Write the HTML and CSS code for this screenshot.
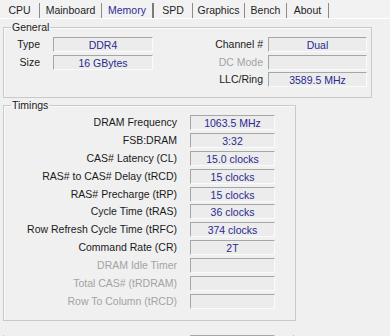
FILE: index.html
```html
<!DOCTYPE html>
<html>
<head>
<meta charset="utf-8">
<link rel="stylesheet" href="styles.css">
</head>
<body>
<div class="tabs">
  <div class="tab t-cpu">CPU</div>
  <div class="tab t-main">Mainboard</div>
  <div class="tab t-mem active">Memory</div>
  <div class="tab t-spd">SPD</div>
  <div class="tab t-gfx">Graphics</div>
  <div class="tab t-bench">Bench</div>
  <div class="tab t-about">About</div>
</div>

<fieldset class="group general">
  <legend>General</legend>
  <div class="gen-grid">
    <div class="lbl l1">Type</div>
    <div class="field">DDR4</div>
    <div class="lbl l2">Channel #</div>
    <div class="field">Dual</div>

    <div class="lbl l1">Size</div>
    <div class="field">16 GBytes</div>
    <div class="lbl l2 dis">DC Mode</div>
    <div class="field"></div>

    <div class="lbl l1"></div>
    <div></div>
    <div class="lbl l2">LLC/Ring</div>
    <div class="field">3589.5 MHz</div>
  </div>
</fieldset>

<fieldset class="group timings">
  <legend>Timings</legend>
  <div class="tim-grid">
    <div class="lbl">DRAM Frequency</div><div class="field">1063.5 MHz</div>
    <div class="lbl">FSB:DRAM</div><div class="field">3:32</div>
    <div class="lbl">CAS# Latency (CL)</div><div class="field">15.0 clocks</div>
    <div class="lbl">RAS# to CAS# Delay (tRCD)</div><div class="field">15 clocks</div>
    <div class="lbl">RAS# Precharge (tRP)</div><div class="field">15 clocks</div>
    <div class="lbl">Cycle Time (tRAS)</div><div class="field">36 clocks</div>
    <div class="lbl">Row Refresh Cycle Time (tRFC)</div><div class="field">374 clocks</div>
    <div class="lbl">Command Rate (CR)</div><div class="field">2T</div>
    <div class="lbl dis">DRAM Idle Timer</div><div class="field"></div>
    <div class="lbl dis">Total CAS# (tRDRAM)</div><div class="field"></div>
    <div class="lbl dis">Row To Column (tRCD)</div><div class="field"></div>
  </div>
</fieldset>

<div class="bottom">
  <div class="field bottom-field"></div>
</div>
</body>
</html>
```

FILE: styles.css
```css
html, body {
  margin: 0;
  padding: 0;
  background: #f0f0f0;
  font-family: "Liberation Sans", Arial, sans-serif;
  font-size: 10.5px;
  color: #1a1a1a;
  overflow: hidden;
  width: 390px;
  height: 336px;
}

.tabs {
  display: flex;
  height: 18px;
  border-bottom: 1px solid #ffffff;
  background: #f2f2f2;
}

.tab {
  box-sizing: border-box;
  height: 15px;
  margin-top: 3px;
  padding-top: 0;
  text-align: center;
  border-right: 1px solid #8c8c8c;
  line-height: 14px;
  color: #1e1e1e;
}

.tab.active {
  color: #2c2c94;
  border-right: 2px solid #7a7a7a;
}

.t-cpu { width: 40px; }
.t-main { width: 62px; }
.t-mem { width: 52px; }
.t-spd { width: 39px; }
.t-gfx { width: 52px; }
.t-bench { width: 42px; }
.t-about { width: 42px; }

.group {
  margin: 0 0 0 3px;
  border: 1px solid #c9c9c9;
  box-shadow: inset 1px 1px 0 #fafafa;
  padding: 0;
  box-sizing: border-box;
}

.group legend {
  padding: 0 1px;
  margin-left: 6px;
  line-height: 13px;
  color: #1a1a1a;
}

.general {
  width: 369px;
  margin-top: 2px;
  padding: 3px 4px 10px 1px;
}

.gen-grid {
  display: grid;
  grid-template-columns: 48px 100px 1fr 99px;
  grid-auto-rows: 15px;
  row-gap: 2.5px;
}

.lbl {
  text-align: right;
  line-height: 15px;
  white-space: nowrap;
}

.l1 { padding-right: 13px; }
.l2 { padding-right: 5px; }

.dis { color: #a3a3a3; }

.field {
  box-sizing: border-box;
  height: 15px;
  line-height: 14px;
  text-align: center;
  color: #2a2a8c;
  background: #ececec;
  border-top: 1px solid #a6a6a6;
  border-left: 1px solid #a6a6a6;
  border-right: 1px solid #fbfbfb;
  border-bottom: 1px solid #fbfbfb;
  white-space: nowrap;
}

.timings {
  width: 293px;
  margin-top: 1px;
  padding: 3px 20px 11px 1px;
}

.tim-grid {
  display: grid;
  grid-template-columns: 1fr 85px;
  grid-auto-rows: 15px;
  row-gap: 2.9px;
}

.tim-grid .lbl { padding-right: 13px; }

.bottom {
  margin: 14px 0 0 3px;
  width: 291px;
  height: 10px;
  box-sizing: border-box;
  border-left: 1px solid #c9c9c9;
  border-right: 1px solid #c9c9c9;
  display: flex;
  justify-content: flex-end;
  padding-right: 18px;
}

.bottom-field {
  width: 85px;
  height: 10px;
  border-bottom: none;
}
```
